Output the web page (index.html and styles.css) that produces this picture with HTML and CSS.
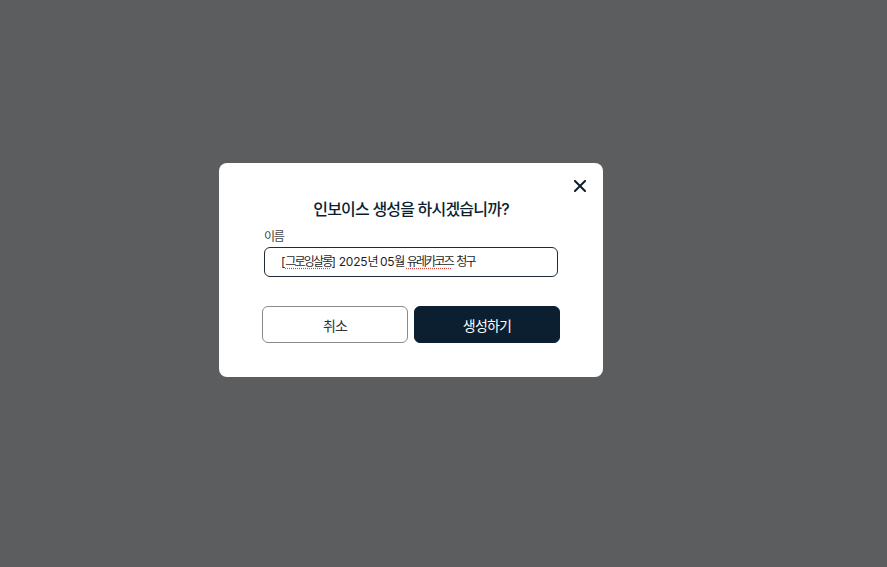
FILE: index.html
```html
<!DOCTYPE html>
<html lang="ko">
<head>
    <meta charset="UTF-8">
    <meta name="viewport" content="width=device-width, initial-scale=1.0">
    <title>인보이스 생성</title>
    <link rel="stylesheet" href="styles.css">
</head>
<body>

    <div class="overlay">
        <div class="modal">
            <button class="close" aria-label="닫기">
                <svg width="12" height="12" viewBox="0 0 12 12">
                    <path d="M1 1L11 11M11 1L1 11" stroke="#0b1f30" stroke-width="2" stroke-linecap="square" fill="none"/>
                </svg>
            </button>

            <h2 class="title">인보이스 생성을 하시겠습니까?</h2>

            <label class="label">이름</label>
            <div class="input"><span class="num">[</span><span class="typo">그로잉살롱</span><span class="num">] 2025</span>년<span class="num"> 05</span>월<span class="num"> </span><span class="typo">유레카코즈</span><span class="num"> </span>청구</div>

            <div class="actions">
                <button class="btn cancel">취소</button>
                <button class="btn primary">생성하기</button>
            </div>
        </div>
    </div>

</body>
</html>
```

FILE: styles.css
```css
/* Basic Reset */
* {
    margin: 0;
    padding: 0;
    box-sizing: border-box;
    font-family: "Inter", "Noto Sans CJK KR", sans-serif;
}

body {
    background: #5c5d5f;
    height: 100vh;
}

.overlay {
    padding: 163px 0 0 219px;
}

.modal {
    position: relative;
    width: 384px;
    background: #fff;
    border-radius: 8px;
    padding: 34px 43px 34px;
    display: flex;
    flex-direction: column;
}

.close {
    position: absolute;
    top: 17px;
    right: 17px;
    width: 12px;
    height: 12px;
    border: none;
    background: none;
    cursor: pointer;
    display: flex;
}

.title {
    font-size: 16px;
    font-weight: 500;
    line-height: 24px;
    letter-spacing: -0.8px;
    color: #0b1f30;
    text-align: center;
}

.label {
    margin-top: 8px;
    padding-left: 2px;
    font-size: 12px;
    line-height: 16px;
    letter-spacing: -1.3px;
    color: #444;
}

.input {
    margin: 2px 2px 0;
    height: 30px;
    border: 1px solid #1e2b38;
    border-radius: 6px;
    padding: 0 16px;
    font-size: 12px;
    line-height: 28px;
    letter-spacing: -1.8px;
    color: #1f1f1f;
    white-space: pre;
}

.input .num {
    letter-spacing: -0.2px;
}

.typo {
    text-decoration: underline dotted #e0443c;
    text-underline-offset: 2px;
}

.actions {
    margin-top: 29px;
    display: flex;
    gap: 6px;
}

.btn {
    flex: 1;
    height: 37px;
    border-radius: 6px;
    font-size: 14px;
    letter-spacing: -0.8px;
    cursor: pointer;
}

.btn.cancel {
    background: #fff;
    border: 1px solid #8a8a8a;
    color: #333;
}

.btn.primary {
    background: #0b1f30;
    border: 1px solid #0b1f30;
    color: #fff;
}
```
